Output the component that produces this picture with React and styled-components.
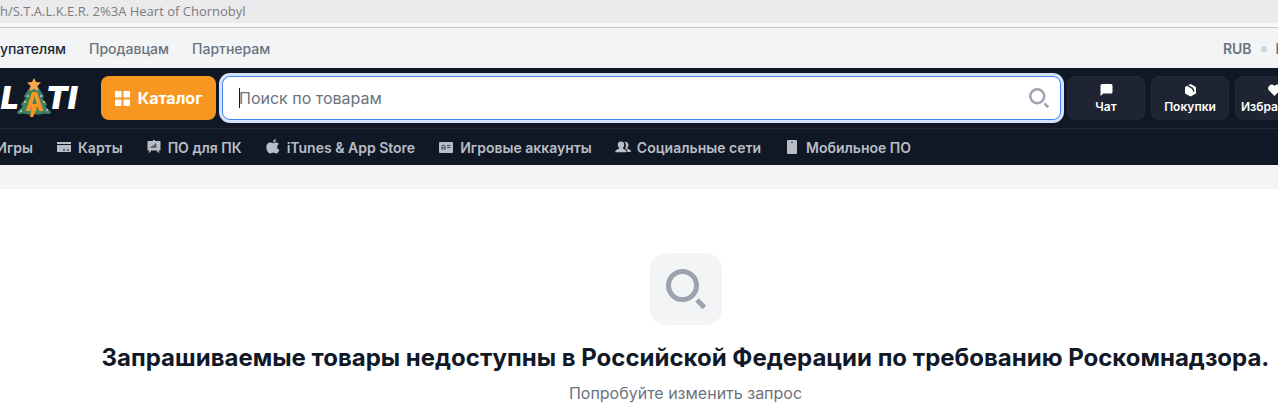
import React from 'react';
import styled, { createGlobalStyle } from 'styled-components';

const GlobalStyle = createGlobalStyle`
  *, *::before, *::after {
    box-sizing: border-box;
  }

  body {
    margin: 0;
    overflow-x: hidden;
    background-color: #ffffff;
    color: #111827;
    font-family: Inter, "Liberation Sans", sans-serif;
    font-size: 14px;
    line-height: 20px;
  }

  a {
    color: inherit;
    text-decoration: none;
  }

  button, input {
    font: inherit;
  }
`;

const Page = styled.div`
  overflow: hidden;
`;

const AddressBar = styled.div`
  height: 28px;
  background-color: #f7f7f8;
  border-bottom: 1px solid #c6c8cc;
`;

const AddressText = styled.div`
  height: 23px;
  background-color: #ebebed;
  color: #7b7b7d;
  font-family: "Open Sans", "Noto Sans", sans-serif;
  font-size: 13px;
  line-height: 23px;
  white-space: nowrap;
`;

const TopBar = styled.div`
  display: flex;
  justify-content: space-between;
  height: 40px;
  padding-top: 11px;
  background-color: #f3f4f6;
  color: #6b7280;
  font-weight: 500;
`;

const TopLinks = styled.nav`
  display: flex;
  gap: 23px;
`;

const TopLink = styled.a`
  display: flex;
  justify-content: flex-end;
  width: ${props => (props.$clip ? '66px' : 'auto')};
  color: ${props => (props.$active ? '#1f2937' : '#6b7280')};
  white-space: nowrap;
`;

const Locale = styled.div`
  display: flex;
  align-items: center;
  gap: 9px;
  height: 20px;
  margin-right: -56px;
  font-weight: 600;
`;

const Dot = styled.span`
  width: 6px;
  height: 6px;
  border-radius: 50%;
  background-color: #d1d5db;
`;

const Header = styled.header`
  background-color: #111825;
`;

// The last action runs past the right edge of the window
const HeaderRow = styled.div`
  display: flex;
  align-items: center;
  gap: 6px;
  height: 60px;
  margin-right: -35px;
`;

const Logo = styled.a`
  display: flex;
  align-items: center;
  justify-content: flex-end;
  flex: none;
  width: 77px;
  margin-right: 18px;
  color: #ffffff;
  font-size: 32px;
  font-style: italic;
  font-weight: 900;
  line-height: 40px;

  svg {
    flex: none;
    margin: 0 -5px 0 -2px;
  }
`;

const CatalogButton = styled.button`
  display: flex;
  align-items: center;
  justify-content: center;
  gap: 8px;
  flex: none;
  width: 115px;
  height: 44px;
  padding: 0;
  border: 0;
  border-radius: 8px;
  background-color: #f79722;
  color: #ffffff;
  font-size: 16px;
  font-weight: 700;
`;

const Search = styled.label`
  position: relative;
  flex: 1;
  min-width: 0;
  height: 44px;

  svg {
    position: absolute;
    top: 12px;
    right: 12px;
  }
`;

const SearchInput = styled.input`
  display: block;
  width: 100%;
  height: 44px;
  padding: 0 44px 0 16px;
  border: 1px solid #4483f7;
  border-radius: 8px;
  outline: none;
  background-color: #ffffff;
  box-shadow: 0 0 0 3px #d5e2fc;
  color: #111827;
  font-size: 16px;

  &::placeholder {
    color: #6b7280;
    opacity: 1;
  }
`;

const Caret = styled.span`
  position: absolute;
  top: 12px;
  left: 17px;
  width: 1px;
  height: 20px;
  background-color: #111827;
`;

const Action = styled.button`
  display: flex;
  flex-direction: column;
  align-items: center;
  flex: none;
  gap: 2px;
  width: 78px;
  height: 44px;
  padding: 7px 0 0;
  border: 1px solid #232a37;
  border-radius: 8px;
  background-color: #1e2431;
  color: #ffffff;
  font-size: 12px;
  font-weight: 600;
  line-height: 16px;
`;

const Categories = styled.nav`
  display: flex;
  align-items: center;
  gap: 23px;
  height: 37px;
  padding-top: 2px;
  border-top: 1px solid #1f2b37;
  color: #b9bdc5;
  font-weight: 600;
`;

const Category = styled.a`
  display: flex;
  align-items: center;
  justify-content: flex-end;
  gap: 6px;
  width: ${props => (props.$clip ? '33px' : 'auto')};
  white-space: nowrap;

  svg {
    flex: none;
    margin-bottom: 2px;
  }
`;

const Strip = styled.div`
  height: 24px;
  background-color: #f3f4f6;
`;

const Empty = styled.main`
  display: flex;
  flex-direction: column;
  align-items: center;
  padding: 64px 0 16px 93px;
  text-align: center;
`;

const EmptyIcon = styled.div`
  display: flex;
  align-items: center;
  justify-content: center;
  width: 72px;
  height: 72px;
  border-radius: 16px;
  background-color: #f3f4f6;
`;

const EmptyTitle = styled.h1`
  margin: 17px 0 7px;
  font-size: 24px;
  font-weight: 700;
  line-height: 32px;
  white-space: nowrap;
`;

const EmptyText = styled.p`
  margin: 0;
  color: #6b7280;
  font-size: 16px;
  line-height: 24px;
`;

function TreeIcon() {
  return (
    <svg width="34" height="40" viewBox="0 0 34 40" aria-hidden="true">
      <path d="M13 9h8l6 9q0 2-2 2l5 6q0 2-2 2l6 6q0 2-3 2-4-1-6 0-4 1-8 0-4 1-8 0-3-1-6 0-3 0-3-2l6-6q-2 0-2-2l5-6q-2 0-2-2z" fill="#3f8062" />
      <text x="8" y="33" fontSize="25" fontWeight="700" fontStyle="normal" fill="#f79722">A</text>
      <path d="m15 27 5 3-4 9h-3z" fill="#f79722" />
      <path d="m17 0 2 4 5 .6-3.600 3.400.9 5L17 10.700l-4.300 2.300.9-5L10 4.600 15 4z" fill="#f8a84e" />
      <g fill="#a9d2f5">
        <circle cx="11" cy="18" r="1" />
        <circle cx="4" cy="33" r="1" />
        <circle cx="30" cy="32" r="1" />
        <circle cx="24" cy="18" r="1" />
      </g>
      <g fill="#f7d27a">
        <circle cx="8" cy="24" r="1" />
        <circle cx="27" cy="24" r="1" />
      </g>
    </svg>
  );
}

function CatalogIcon() {
  return (
    <svg width="15" height="15" viewBox="0 0 16 16" fill="currentColor" aria-hidden="true">
      <rect width="7" height="7" rx="1" />
      <rect x="9" width="7" height="7" rx="1" />
      <rect y="9" width="7" height="7" rx="1" />
      <rect x="9" y="9" width="7" height="7" rx="1" />
    </svg>
  );
}

function SearchIcon({ size }) {
  return (
    <svg width={size} height={size} viewBox="0 0 40 40" fill="none" stroke="#9ca3af" aria-hidden="true">
      <circle cx="16.500" cy="16.500" r="14" strokeWidth="5" />
      <path d="m31 31 7.500 7.500" strokeWidth="5" />
    </svg>
  );
}

const actionIcons = {
  chat: <path d="M2 0h9a1.500 1.500 0 0 1 1.500 1.500V8A1.500 1.500 0 0 1 11 9.500H3.500L.5 12V1.500A1.500 1.500 0 0 1 2 0z" />,
  box: (
    <>
      <path d="M6.500 0 12 3v6.500L6.500 12.500 1 9.500V3z" />
      <path d="M3.500 1.500 8.500 4.300 10 7.500" fill="none" stroke="#1e2431" strokeWidth="1.400" />
    </>
  ),
  heart: <path d="M6.500 12 1.300 6.800a3.500 3.500 0 0 1 5-5l.2.200.2-.2a3.500 3.500 0 0 1 5 5z" />,
};

const categoryIcons = {
  card: (
    <>
      <path d="M1 3h14v2H1zM1 6h14v7H1z" />
      <path d="M7 11h2M11 11h2" stroke="#111825" />
    </>
  ),
  board: (
    <>
      <path d="M7 1h2v1h5.500v9.500h-2l1 2h-1.700l-1-2H5.200l-1 2H2.500l1-2h-2V2H7z" />
      <path d="M5.500 9V7.500M7.500 9V6M9.500 9V4.500" stroke="#5d626c" strokeWidth="2" />
    </>
  ),
  apple: (
    <path d="M11 0c.1 1.900-1.300 3.400-3 3.400C7.800 1.700 9.300.200 11 0zM8 4.300c.8 0 1.600-.8 3-.8 1.300 0 2.300.6 2.900 1.500-2.600 1.500-2.200 5 .5 6-.7 1.700-1.900 3.500-3.200 3.500-1.200 0-1.600-.7-3-.7s-1.900.7-3 .7C3.400 14.500 1.300 11 1.300 8.200c0-3 1.900-4.600 3.800-4.600 1.300 0 2.200.7 2.900.7z" />
  ),
  account: (
    <>
      <rect x="1" y="3" width="14" height="11" rx="1" />
      <path d="M4 11V7.500q0-1.500 1.500-1.500T7 7.500V11M4 9h3M9 6.500h3.500M9 8.500h3.500" fill="none" stroke="#3c424d" />
    </>
  ),
  people: (
    <>
      <path d="M9.500 3a3 3 0 0 1 4 3c0 1.500-.7 2.500-1.500 3 0 1 4 1.300 4 4h-3.500c0-2.500-1.500-3-2.500-3.800C11.500 7.500 11.200 4.500 9.500 3z" />
      <path d="M6 2.500a3.200 3.200 0 0 1 3.200 3.300c0 1.500-.7 2.700-1.500 3.200 0 1.200 4 1.300 4 4.200H.2C.2 10.300 4.300 10.200 4.300 9c-.8-.5-1.500-1.700-1.500-3.200A3.200 3.200 0 0 1 6 2.500z" />
    </>
  ),
  phone: (
    <>
      <rect x="3" y="1" width="10" height="14" rx="1" />
      <path d="M7 3.500h2" stroke="#3c424d" />
    </>
  ),
};

const actions = [
  { icon: 'chat', label: 'Чат' },
  { icon: 'box', label: 'Покупки' },
  { icon: 'heart', label: 'Избранное' },
];

const categories = [
  { icon: 'card', label: 'Карты' },
  { icon: 'board', label: 'ПО для ПК' },
  { icon: 'apple', label: 'iTunes & App Store' },
  { icon: 'account', label: 'Игровые аккаунты' },
  { icon: 'people', label: 'Социальные сети' },
  { icon: 'phone', label: 'Мобильное ПО' },
];

function App() {
  return (
    <Page>
      <GlobalStyle />
      <AddressBar>
        <AddressText>h/S.T.A.L.K.E.R. 2%3A Heart of Chornobyl</AddressText>
      </AddressBar>

      <TopBar>
        <TopLinks>
          <TopLink href="#" $active $clip>Покупателям</TopLink>
          <TopLink href="#">Продавцам</TopLink>
          <TopLink href="#">Партнерам</TopLink>
        </TopLinks>
        <Locale>
          <span>RUB</span>
          <Dot />
          <span>Русский</span>
        </Locale>
      </TopBar>

      <Header>
        <HeaderRow>
          <Logo href="#">
            <span>L</span>
            <TreeIcon />
            <span>TI</span>
          </Logo>
          <CatalogButton type="button">
            <CatalogIcon />
            Каталог
          </CatalogButton>
          <Search>
            <SearchInput type="text" placeholder="Поиск по товарам" aria-label="Поиск по товарам" />
            <Caret />
            <SearchIcon size={20} />
          </Search>
          {actions.map(({ icon, label }) => (
            <Action key={icon} type="button">
              <svg width="13" height="13" viewBox="0 0 13 13" fill="currentColor" aria-hidden="true">
                {actionIcons[icon]}
              </svg>
              {label}
            </Action>
          ))}
        </HeaderRow>

        <Categories>
          <Category href="#" $clip>Игры</Category>
          {categories.map(({ icon, label }) => (
            <Category key={icon} href="#">
              <svg width="16" height="16" viewBox="0 0 16 16" fill="currentColor" aria-hidden="true">
                {categoryIcons[icon]}
              </svg>
              {label}
            </Category>
          ))}
        </Categories>
      </Header>

      <Strip />

      <Empty>
        <EmptyIcon>
          <SearchIcon size={40} />
        </EmptyIcon>
        <EmptyTitle>
          Запрашиваемые товары недоступны в Российской Федерации по требованию Роскомнадзора.
        </EmptyTitle>
        <EmptyText>Попробуйте изменить запрос</EmptyText>
      </Empty>
    </Page>
  );
}

export default App;
